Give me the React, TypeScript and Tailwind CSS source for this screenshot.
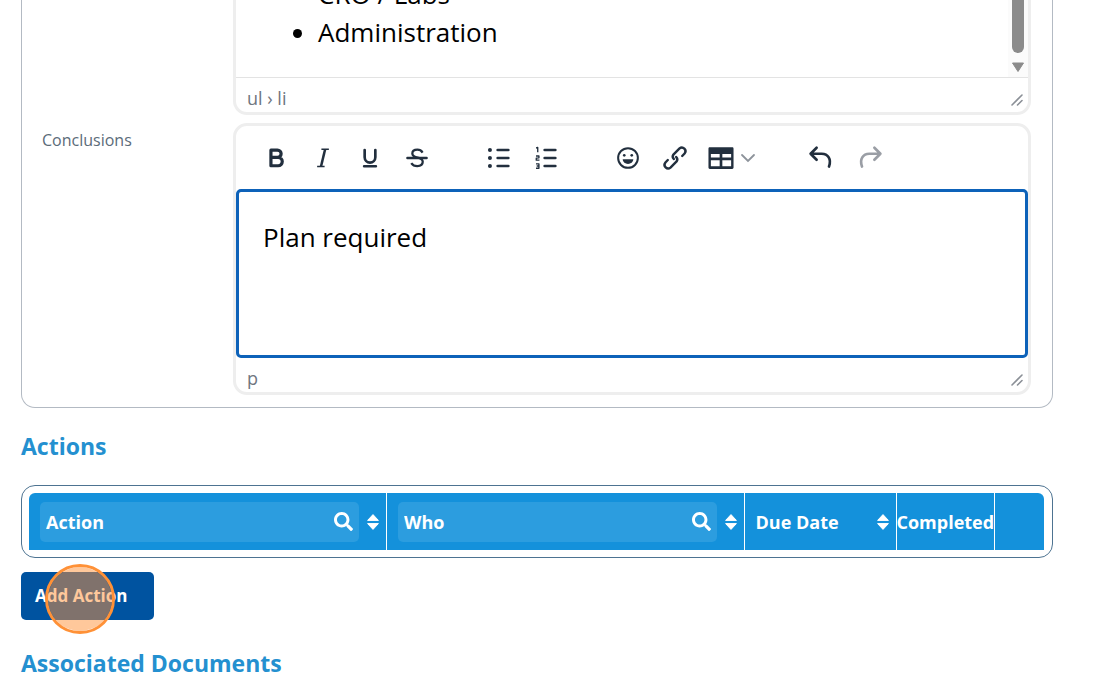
import React, { useState } from 'react';
import { FaSearch } from 'react-icons/fa';

interface IconProps {
  children: React.ReactNode;
}

const Icon: React.FC<IconProps> = ({ children }) => (
  <svg
    viewBox="0 0 24 24"
    className="h-8 w-8 shrink-0"
    fill="none"
    stroke="currentColor"
    strokeWidth="2"
    strokeLinecap="round"
    strokeLinejoin="round"
    aria-hidden="true"
  >
    {children}
  </svg>
);

interface ToolButtonProps {
  label: string;
  disabled?: boolean;
  children: React.ReactNode;
}

const ToolButton: React.FC<ToolButtonProps> = ({ label, disabled, children }) => (
  <button
    type="button"
    aria-label={label}
    disabled={disabled}
    className="flex h-11 w-[47px] items-center justify-center text-[#222f3e] disabled:text-[#9a9ea5]"
  >
    <Icon>{children}</Icon>
  </button>
);

const Toolbar = () => (
  <div className="flex h-[63px] items-center gap-[35px] px-4">
    {/* Text formatting */}
    <div className="flex">
      <ToolButton label="Bold">
        <path d="M8.2 6.1h4.9a2.7 2.7 0 0 1 0 5.5H8.2zM8.2 11.6h5.4a3.1 3.1 0 0 1 0 6.2H8.2z" strokeWidth="2.4" />
      </ToolButton>
      <ToolButton label="Italic">
        <path d="M10.8 5.4h5.6M7.6 18.4h5.6" strokeWidth="1.2" strokeLinecap="butt" />
        <path d="M13.6 5.4l-3.1 13" strokeWidth="1.9" strokeLinecap="butt" />
      </ToolButton>
      <ToolButton label="Underline">
        <path d="M8 6v5.5a4 4 0 0 0 8 0V6M7.6 18.2h8.8" />
      </ToolButton>
      <ToolButton label="Strikethrough">
        <path d="M16.2 7.9C15.3 6.5 14 5.8 12.3 5.8c-2.3 0-3.8 1.1-3.8 2.9 0 1.9 1.5 2.6 4 3.1 2.6.5 3.8 1.4 3.8 3.1 0 2-1.5 3.2-4.1 3.2-2 0-3.5-.8-4.5-2.3" strokeWidth="1.7" strokeLinecap="butt" />
        <path d="M4.8 12h14.4" strokeWidth="1.8" />
      </ToolButton>
    </div>

    {/* Lists */}
    <div className="flex">
      <ToolButton label="Bullet list">
        <path d="M11 6h8M11 12h8M11 18h8" />
        <g fill="currentColor" stroke="none">
          <circle cx="5.2" cy="6" r="1.5" />
          <circle cx="5.2" cy="12" r="1.5" />
          <circle cx="5.2" cy="18" r="1.5" />
        </g>
      </ToolButton>
      <ToolButton label="Numbered list">
        <path d="M11 6h8M11 12h8M11 18h8" />
        <path d="M4.6 4.5l1.2-.4v3.6M4.5 10.5h2.2v1.4l-2 .2v1.5h2.4M4.5 16.4h2.2v3.3H4.5M5 18h1.7" strokeWidth="1" strokeLinecap="butt" />
      </ToolButton>
    </div>

    {/* Inserts */}
    <div className="flex">
      <ToolButton label="Emojis">
        <circle cx="12" cy="12" r="7.4" strokeWidth="1.5" />
        <g fill="currentColor" stroke="none">
          <circle cx="9.2" cy="10" r="1" />
          <circle cx="14.8" cy="10" r="1" />
          <path d="M8 12.9h8a4 3.6 0 0 1-8 0z" />
        </g>
      </ToolButton>
      <ToolButton label="Link">
        <path d="M11.2 12.8a2.6 2.6 0 0 1-.4-3.4l4.6-4.6a2.7 2.7 0 0 1 3.8 3.8l-1.8 1.9" strokeWidth="1.8" />
        <path d="M12.8 11.2a2.6 2.6 0 0 1 .4 3.4l-4.6 4.6a2.7 2.7 0 0 1-3.8-3.8l1.8-1.9" strokeWidth="1.8" />
      </ToolButton>
      <button type="button" aria-label="Table" className="flex h-11 w-16 items-center pl-[7px] text-[#222f3e]">
        <Icon>
          <path
            fill="currentColor"
            stroke="none"
            fillRule="evenodd"
            d="M3.6 4h16.800c.6 0 1 .4 1 1v14.200c0 .6-.4 1-1 1H3.600c-.6 0-1-.4-1-1V5c0-.6.4-1 1-1Zm.8 5v2.700h6.600V9H4.400Zm8.600 0v2.700h6.600V9H13ZM4.400 13.700v4.500h6.600v-4.500H4.400Zm8.600 0v4.500h6.600v-4.500H13Z"
          />
        </Icon>
        <svg viewBox="0 0 16 16" className="ml-[3px] h-4 w-4 shrink-0 text-[#8d939b]" fill="none" stroke="currentColor" strokeWidth="1.8" strokeLinecap="round" aria-hidden="true">
          <path d="M2 5l6 6 6-6" />
        </svg>
      </button>
    </div>

    {/* History */}
    <div className="flex gap-0.5">
      <ToolButton label="Undo">
        <path d="M8.700 4.300L4.200 8.800l4.500 4.500M4.200 8.800h8.300c4.800 0 7.500 4.100 5.500 9.600" strokeWidth="2" />
      </ToolButton>
      <ToolButton label="Redo" disabled>
        <path d="M15.300 4.300l4.500 4.500-4.500 4.500M19.800 8.800h-8.300C6.700 8.800 4 12.900 6 18.400" strokeWidth="2" />
      </ToolButton>
    </div>
  </div>
);

const StatusBar: React.FC<{ path: string }> = ({ path }) => (
  <div className="flex h-[34px] items-center justify-between pl-[11px] pr-1 pt-1.5 text-[18px] leading-6 text-[#6f7680]">
    <span>{path}</span>
    <svg viewBox="0 0 14 14" className="mt-1 h-3.5 w-3.5" fill="none" stroke="#8b9097" strokeWidth="1.6" strokeLinecap="round" aria-hidden="true">
      <path d="M2 12L12 2M7.5 12L12 7.5" />
    </svg>
  </div>
);

const SortIcon = () => (
  <svg viewBox="0 0 12 16" className="h-4 w-3 shrink-0" fill="#fff" stroke="#fff" strokeLinejoin="round" aria-hidden="true">
    <path d="M6 .6l5.4 5.8H.6zM6 15.4L.6 9.6h10.8z" />
  </svg>
);

const FilterHeader: React.FC<{ label: string }> = ({ label }) => {
  const [value, setValue] = useState('');

  return (
    <div className="flex items-center gap-2 pl-[11px] pr-[7px]">
      <div className="flex h-10 min-w-0 flex-1 items-center rounded-[5px] bg-[#2c9ddf] px-1.5">
        <input
          type="text"
          aria-label={label}
          placeholder={label}
          value={value}
          onChange={(e) => setValue(e.target.value)}
          className="min-w-0 flex-1 bg-transparent font-bold text-white outline-none placeholder:text-white"
        />
        <FaSearch className="h-[19px] w-[19px] shrink-0" />
      </div>
      <button type="button" aria-label={`Sort by ${label}`}>
        <SortIcon />
      </button>
    </div>
  );
};

export default function App() {
  const [conclusions, setConclusions] = useState('Plan required');

  return (
    <main className="h-screen overflow-hidden bg-white pl-[21px] pr-[67px] font-['Open_Sans','Noto_Sans',sans-serif]">
      <section className="flex flex-col gap-2 rounded-b-[14px] border border-t-0 border-[#b3bac3] pb-3 pl-5 pr-[21px]">
        <div className="flex">
          <div className="w-[191px] shrink-0" />
          <div className="min-w-0 flex-1 overflow-hidden rounded-b-[14px] border-[3px] border-t-0 border-[#eee]">
            <div className="flex h-[77px] justify-between overflow-hidden">
              <ul className="-mt-[25px] list-disc pl-[82px] text-[26px] leading-[38px] text-black">
                <li>CRO / Labs</li>
                <li>Administration</li>
              </ul>
              <div className="flex w-5 flex-col items-center bg-[#fbfbfb]">
                <div className="h-[53px] w-3 rounded-b-full bg-[#8b8b8b]" />
                <svg viewBox="0 0 12 10" className="mt-[9px] h-2.5 w-3" fill="#8b8b8b" stroke="#8b8b8b" strokeLinejoin="round" aria-hidden="true">
                  <path d="M.5 1h11L6 9.5z" />
                </svg>
              </div>
            </div>
            <div className="border-t border-[#e3e3e3]">
              <StatusBar path="ul › li" />
            </div>
          </div>
        </div>

        <div className="flex">
          <label htmlFor="conclusions" className="w-[191px] shrink-0 pt-[5px] text-[16px] leading-6 text-[#5b6b79]">
            Conclusions
          </label>
          <div className="min-w-0 flex-1 rounded-[14px] border-[3px] border-[#eee]">
            <Toolbar />
            <textarea
              id="conclusions"
              value={conclusions}
              onChange={(e) => setConclusions(e.target.value)}
              className="block h-[169px] w-full resize-none rounded-[5px] border-[3px] border-[#0d62b9] px-6 py-[26px] text-[26px] leading-[38px] text-black outline-none"
            />
            <StatusBar path="p" />
          </div>
        </div>
      </section>

      <h2 className="mt-7 text-[23px] font-bold leading-5 text-[#2490d0]">Actions</h2>

      <div className="mt-[29px] rounded-[14px] border border-[#4d7391] p-[7px] pr-2">
        <div className="overflow-hidden rounded-t-md bg-[#1491db]">
          <table className="w-full table-fixed border-collapse text-left text-[18px] leading-6 text-white">
            <colgroup>
              <col />
              <col />
              <col className="w-[152px]" />
              <col className="w-[98px]" />
              <col className="w-[50px]" />
            </colgroup>
            <thead>
              <tr className="h-[57px]">
                <th className="border-r border-white p-0">
                  <FilterHeader label="Action" />
                </th>
                <th className="border-r border-white p-0">
                  <FilterHeader label="Who" />
                </th>
                <th className="border-r border-white p-0">
                  <div className="flex items-center justify-between pl-[11px] pr-[7px]">
                    <span>Due Date</span>
                    <button type="button" aria-label="Sort by Due Date">
                      <SortIcon />
                    </button>
                  </div>
                </th>
                <th className="whitespace-nowrap border-r border-white p-0">Completed</th>
                <th className="p-0" />
              </tr>
            </thead>
          </table>
        </div>
      </div>

      <div className="relative mt-3.5 w-fit">
        <button type="button" className="block h-12 rounded-[5px] bg-[#0053a0] pl-3.5 pr-[27px] text-[17px] font-bold text-white">
          Add Action
        </button>
        {/* Click marker */}
        <span className="pointer-events-none absolute -top-2 left-6 h-[70px] w-[70px] rounded-full border-[3px] border-[#ff9137] bg-[#ff9137]/50 bg-clip-padding" />
      </div>

      <h2 className="mt-[33px] text-[23px] font-bold leading-5 text-[#2490d0]">Associated Documents</h2>
    </main>
  );
}
